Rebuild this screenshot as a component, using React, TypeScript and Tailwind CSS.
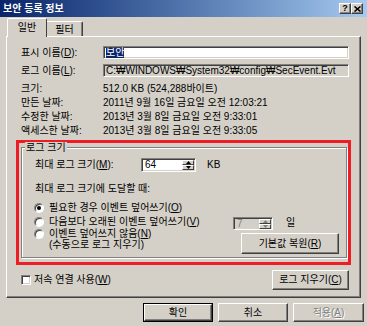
import React from "react";

const raised =
  "border border-white border-r-[#404040] border-b-[#404040] shadow-[inset_-1px_-1px_0_#808080]";
const sunken =
  "border border-[#808080] border-r-white border-b-white shadow-[inset_1px_1px_0_#404040,inset_-1px_-1px_0_#d4d0c8]";

function U({ c }: { c: string }) {
  return <span className="underline underline-offset-[1px]">{c}</span>;
}

function TitleBtn({ children }: { children: React.ReactNode }) {
  return (
    <div className={`w-[12px] h-[11px] bg-[#d4d0c8] flex items-center justify-center ${raised}`}>
      {children}
    </div>
  );
}

function Arrows({ disabled }: { disabled?: boolean }) {
  const c = disabled ? "#808080" : "#000";
  return (
    <div className="flex flex-col w-[12px] h-full shrink-0">
      <div className="flex-1 flex items-center justify-center bg-[#d4d0c8] border border-white border-r-[#404040] border-b-[#404040]">
        <svg width="5" height="3" viewBox="0 0 5 3">
          <path d="M2.5 0 L5 3 L0 3 Z" fill={c} />
        </svg>
      </div>
      <div className="flex-1 flex items-center justify-center bg-[#d4d0c8] border border-white border-r-[#404040] border-b-[#404040]">
        <svg width="5" height="3" viewBox="0 0 5 3">
          <path d="M0 0 L5 0 L2.5 3 Z" fill={c} />
        </svg>
      </div>
    </div>
  );
}

function Spin({ value, disabled, className }: { value: string; disabled?: boolean; className: string }) {
  return (
    <div className={`flex p-[1px] ${sunken} ${disabled ? "bg-[#d4d0c8]" : "bg-white"} ${className}`}>
      <div className={`flex-1 flex items-center pl-[2px] ${disabled ? "text-[#808080]" : ""}`}>{value}</div>
      <Arrows disabled={disabled} />
    </div>
  );
}

function Radio({ checked }: { checked?: boolean }) {
  return (
    <div className="w-[10px] h-[10px] shrink-0 rounded-full bg-white border border-[#808080] border-r-white border-b-white shadow-[inset_1px_1px_0_#404040] flex items-center justify-center">
      {checked && <div className="w-[4px] h-[4px] rounded-full bg-black" />}
    </div>
  );
}

function Btn({
  children,
  className,
  def,
  disabled,
}: {
  children: React.ReactNode;
  className: string;
  def?: boolean;
  disabled?: boolean;
}) {
  const inner = (
    <div
      className={`w-full h-full flex items-center justify-center bg-[#d4d0c8] ${raised} ${
        disabled ? "text-[#808080] [text-shadow:1px_1px_0_#fff]" : ""
      }`}
    >
      {children}
    </div>
  );
  if (def) return <div className={`border border-black ${className}`}>{inner}</div>;
  return <div className={className}>{inner}</div>;
}

const info = [
  ["크기:", "512.0 KB (524,288바이트)"],
  ["만든 날짜:", "2011년 9월 16일 금요일 오전 12:03:21"],
  ["수정한 날짜:", "2013년 3월 8일 금요일 오전 9:33:01"],
  ["액세스한 날짜:", "2013년 3월 8일 금요일 오전 9:33:05"],
];

export default function App() {
  return (
    <div className="w-[367px] h-[326px] bg-[#d4d0c8] overflow-hidden text-black text-[10px] leading-[14px] [font-family:'Liberation_Sans','Noto_Sans_CJK_KR',sans-serif]">
      {/* title bar */}
      <div className="h-[17px] flex items-center justify-between pl-[3px] pr-[4px] bg-linear-to-r from-[#0a246a] to-[#a6caf0]">
        <span className="text-white font-bold">보안 등록 정보</span>
        <div className="flex">
          <TitleBtn>
            <span className="font-bold text-[9px] leading-[9px]">?</span>
          </TitleBtn>
          <TitleBtn>
            <svg width="7" height="6" viewBox="0 0 7 6">
              <path d="M0.5 0.5 L6.5 5.5 M6.5 0.5 L0.5 5.5" stroke="#000" strokeWidth="1.6" />
            </svg>
          </TitleBtn>
        </div>
      </div>

      {/* tabs */}
      <div className="h-[19px] flex items-end pl-[7px]">
        <div className="relative z-10 -mb-[1px] h-[19px] w-[40px] flex items-center justify-center bg-[#d4d0c8] border border-white border-b-0 border-r-[#404040] rounded-t-[2px]">
          일반
        </div>
        <div className="h-[15px] w-[36px] flex items-center justify-center pt-[2px] border-t border-t-white border-r border-r-[#404040] shadow-[inset_-1px_0_0_#808080] rounded-tr-[2px]">
          필터
        </div>
      </div>

      {/* panel */}
      <div className={`mx-[6px] h-[262px] pl-[14px] pt-[9px] ${raised}`}>
        <div className="flex items-center h-[13px]">
          <div className="w-[82px]">
            표시 이름(<U c="D" />):
          </div>
          <div className={`w-[246px] h-[13px] bg-white flex items-center pl-[2px] ${sunken}`}>
            <span className="bg-[#0a246a] text-white leading-[10px]">보안</span>
          </div>
        </div>
        <div className="flex items-center h-[13px] mt-[5px]">
          <div className="w-[82px]">
            로그 이름(<U c="L" />):
          </div>
          <div className={`w-[246px] h-[13px] bg-[#d4d0c8] flex items-center pl-[2px] whitespace-nowrap ${sunken}`}>
            C:₩WINDOWS₩System32₩config₩SecEvent.Evt
          </div>
        </div>

        <div className="mt-[5px]">
          {info.map(([k, v]) => (
            <div key={k} className="flex items-center h-[14px]">
              <div className="w-[82px]">{k}</div>
              <div className="whitespace-nowrap">{v}</div>
            </div>
          ))}
        </div>

        {/* log size group */}
        <div className="mt-[2px] -ml-[5px] w-[335px] border-[3px] border-[#ee1c24] pb-[4px]">
          <div className="mt-[4px] ml-[2px] mr-[1px] pb-[3px] border border-[#808080] shadow-[inset_1px_1px_0_#fff,1px_1px_0_#fff]">
            <div className="-mt-[6px] ml-[3px] w-fit px-[1px] bg-[#d4d0c8] leading-[12px]">로그 크기</div>

            <div className="mt-[4px] flex items-center h-[14px] pl-[13px]">
              <div className="w-[106px]">
                최대 로그 크기(<U c="M" />):
              </div>
              <Spin value="64" className="w-[55px] h-[14px]" />
              <div className="ml-[11px]">KB</div>
            </div>

            <div className="mt-[10px] h-[14px] flex items-center pl-[13px]">최대 로그 크기에 도달할 때:</div>

            <div className="mt-[5px] h-[14px] flex items-center pl-[12px]">
              <Radio checked />
              <div className="ml-[5px]">
                필요한 경우 이벤트 덮어쓰기(<U c="O" />)
              </div>
            </div>

            <div className="h-[13px] flex items-start pl-[12px]">
              <div className="h-[13px] flex items-center">
                <Radio />
              </div>
              <div className="ml-[5px] w-[184px] h-[13px] flex items-center">
                다음보다 오래된 이벤트 덮어쓰기(<U c="V" />)
              </div>
              <Spin value="7" disabled className="w-[40px] h-[13px] mt-[2px]" />
              <div className="ml-[13px] h-[13px] mt-[1px] flex items-center">일</div>
            </div>

            <div className="mt-[1px] flex items-start justify-between pl-[12px] pr-[7px]">
              <div className="flex items-start">
                <div className="h-[10px] mt-[0px] flex items-center">
                  <Radio />
                </div>
                <div className="ml-[5px] leading-[10.5px]">
                  이벤트 덮어쓰지 않음(<U c="N" />)
                  <br />
                  (수동으로 로그 지우기)
                </div>
              </div>
              <Btn className="mt-[4px] w-[98px] h-[21px]">
                기본값 복원(<U c="R" />)
              </Btn>
            </div>
          </div>
        </div>

        <div className="mt-[5px] w-[328px] h-[20px] flex items-center justify-between">
          <div className="flex items-center">
            <div className={`w-[10px] h-[10px] bg-white ${sunken}`} />
            <div className="ml-[3px]">
              저속 연결 사용(<U c="W" />)
            </div>
          </div>
          <Btn className="w-[77px] h-[20px]">
            로그 지우기(<U c="C" />)
          </Btn>
        </div>
      </div>

      {/* dialog buttons */}
      <div className="mt-[5px] flex justify-end gap-[5px] pr-[3px]">
        <Btn def className="w-[70px] h-[19px]">
          확인
        </Btn>
        <Btn className="w-[70px] h-[19px]">취소</Btn>
        <Btn disabled className="w-[71px] h-[19px]">
          적용(<U c="A" />)
        </Btn>
      </div>
    </div>
  );
}
